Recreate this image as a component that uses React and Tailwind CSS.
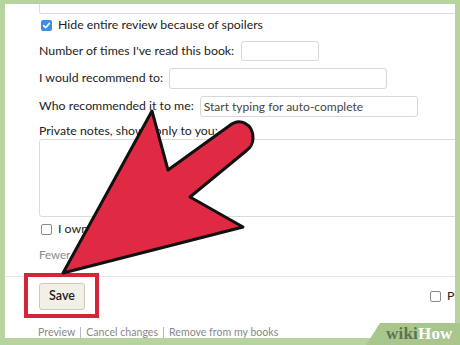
import React from "react";

function Check({ checked }) {
  if (checked) {
    return (
      <span className="w-[11px] h-[11px] rounded-[2px] bg-[#3a8ee6] flex items-center justify-center shrink-0">
        <svg width="9" height="9" viewBox="0 0 10 10">
          <path d="M1.8 5.2 L4 7.4 L8.3 2.6" fill="none" stroke="white" strokeWidth="1.8" strokeLinecap="round" strokeLinejoin="round" />
        </svg>
      </span>
    );
  }
  return <span className="w-[11px] h-[11px] rounded-[2px] border border-[#8a8a8a] bg-white shrink-0" />;
}

export default function App() {
  return (
    <div className="w-[460px] h-[345px] bg-[#b7d3a0] pt-[4px] px-[5px] pb-[7px] relative overflow-hidden font-['Lato','Noto_Sans',sans-serif] text-[#222]">
      <div className="bg-white h-full relative overflow-hidden flex flex-col">
        <div className="pl-[34px]">
          <div className="h-[10px] border-x border-b border-[#dcdcdc] rounded-b-[3px] -mr-[4px]" />
          <div className="mt-[5px] h-[12px] flex items-center text-[12.3px] pl-[2px] gap-[6px]">
            <Check checked />
            <span>Hide entire review because of spoilers</span>
          </div>
          <div className="mt-[10px] h-[20px] flex items-center text-[12.3px] gap-[7px]">
            <span>Number of times I've read this book:</span>
            <span className="w-[78px] h-[20px] border border-[#d8d8d8] rounded-[3px]" />
          </div>
          <div className="mt-[7px] h-[21px] flex items-center text-[12.3px] gap-[6px]">
            <span>I would recommend to:</span>
            <span className="w-[218px] h-[21px] border border-[#d8d8d8] rounded-[3px]" />
          </div>
          <div className="mt-[7px] h-[21px] flex items-center text-[12.3px] gap-[6px]">
            <span>Who recommended it to me:</span>
            <span className="w-[218px] h-[21px] border border-[#d8d8d8] rounded-[3px] flex items-center pl-[3px] text-[12px] text-[#444]">
              Start typing for auto-complete
            </span>
          </div>
          <div className="mt-[7px] h-[14px] flex items-center text-[12.3px]">
            Private notes, shown only to you:
          </div>
          <div className="mt-[1px] h-[78px] border border-[#dcdcdc] rounded-[3px] -mr-[4px]" />
          <div className="mt-[7px] h-[11px] flex items-center text-[12.3px] pl-[2px] gap-[6px]">
            <Check />
            <span>I own a copy of this book</span>
          </div>
          <div className="mt-[13px] h-[14px] flex items-center text-[11.5px] text-[#8a8a8a]">Fewer</div>
        </div>
        <div className="mt-[14px] border-t border-[#e6e6e6]" />
        <div className="mt-[6px] h-[27px] pl-[34px] flex items-center justify-between">
          <button className="w-[46px] h-[27px] rounded-[3px] bg-[#f2efe7] border border-[#cfcac0] text-[12.5px] font-semibold text-[#222] font-['Lato',sans-serif]">
            Save
          </button>
          <div className="flex items-center gap-[6px] text-[12.3px] -mr-[32px] w-[57px] shrink-0">
            <Check />
            <span>Private</span>
          </div>
        </div>
        <div className="mt-[16px] h-[14px] pl-[33px] flex items-center text-[10.6px] text-[#888]">
          <span>Preview</span>
          <span className="mx-[5px] w-px h-[13px] bg-[#bbb]" />
          <span>Cancel changes</span>
          <span className="mx-[5px] w-px h-[13px] bg-[#bbb]" />
          <span>Remove from my books</span>
        </div>
      </div>

      <div className="absolute left-[24px] top-[273px] w-[75px] h-[45px] border-[4px] border-[#d2263b]" />

      <svg className="absolute left-0 top-0" width="460" height="345" viewBox="0 0 460 345">
        <path
          d="M63 273 L152 111 L168 170 L229 126 C240 117 253 124 253 138 C253 145 250 148 246 151 L190 197 L243 227 Z"
          fill="#e02a44"
          stroke="#111"
          strokeWidth="3"
          strokeLinejoin="round"
        />
      </svg>

      <div className="absolute left-[366px] top-[323px] w-[94px] h-[22px] bg-[#a9c68d] [clip-path:polygon(14px_0,100%_0,100%_100%,0_100%)]" />
      <div className="absolute left-[386px] top-[324px] text-[17px] font-bold leading-[20px] font-['Liberation_Serif',serif] tracking-[0.2px]">
        <span className="text-[#5f7351]">wiki</span>
        <span className="text-white">How</span>
      </div>
    </div>
  );
}
